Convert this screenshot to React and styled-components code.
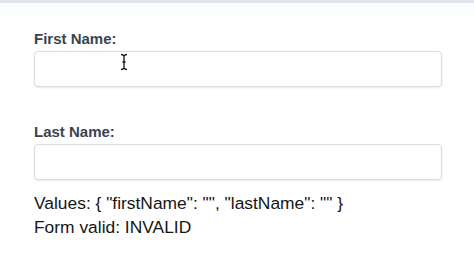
import React, { useState } from 'react';
import styled, { createGlobalStyle } from 'styled-components';

const Global = createGlobalStyle`
  html, body {
    margin: 0;
    padding: 0;
    background: #ffffff;
  }
  body {
    font-family: "Liberation Sans", Arial, Helvetica, sans-serif;
  }
`

const Page = styled.div`
  border-top: 3px solid #e3e6ee;
  background: linear-gradient(#fbfcfd, #ffffff 18px);
  height: 267px;
  padding: 27px 32px 0 34px;
  box-sizing: border-box;
`

const Field = styled.div`
  display: flex;
  flex-direction: column;
  width: 408px;
  margin-bottom: ${p => p.$gap || 0}px;
  position: relative;
`

const Label = styled.label`
  font-size: 15px;
  line-height: 17px;
  font-weight: bold;
  color: #3b4350;
  margin-bottom: 4px;
`

const Input = styled.input`
  box-sizing: border-box;
  height: 36px;
  width: 100%;
  border: 1px solid #d9dce2;
  border-radius: 4px;
  box-shadow: 0 1px 2px rgba(0, 0, 0, 0.09);
  background: #fff;
  outline: none;
  padding: 0 10px;
  font-size: 14px;
  font-family: inherit;
`

const Cursor = styled.svg`
  position: absolute;
  left: 86px;
  top: 23px;
  pointer-events: none;
`

const Output = styled.div`
  font-size: 17.4px;
  line-height: 24px;
  color: #161616;
  margin-top: 11px;
`

export default function App() {
  const [values, setValues] = useState({ firstName: '', lastName: '' });
  const valid = values.firstName && values.lastName;

  const set = key => e => setValues({ ...values, [key]: e.target.value });

  return <>
    <Global />
    <Page>
      <Field $gap={36}>
        <Label>First Name:</Label>
        <Input value={values.firstName} onChange={set('firstName')} />
        <Cursor width="8" height="18" viewBox="0 0 8 18">
          <path d="M1 1.5 C2.5 1.5 3.5 2 4 3 C4.5 2 5.5 1.5 7 1.5 M4 3 V15 M1 16.5 C2.5 16.5 3.5 16 4 15 C4.5 16 5.5 16.5 7 16.5 M2.5 9 H5.5" stroke="#111" strokeWidth="1.3" fill="none" />
        </Cursor>
      </Field>
      <Field>
        <Label>Last Name:</Label>
        <Input value={values.lastName} onChange={set('lastName')} />
      </Field>
      <Output>
        <div>Values: {JSON.stringify(values).replace(/^\{/, '{ ').replace(/\}$/, ' }').replace(/:/g, ': ').replace(/,/g, ', ')}</div>
        <div>Form valid: {valid ? 'VALID' : 'INVALID'}</div>
      </Output>
    </Page>
  </>
}
